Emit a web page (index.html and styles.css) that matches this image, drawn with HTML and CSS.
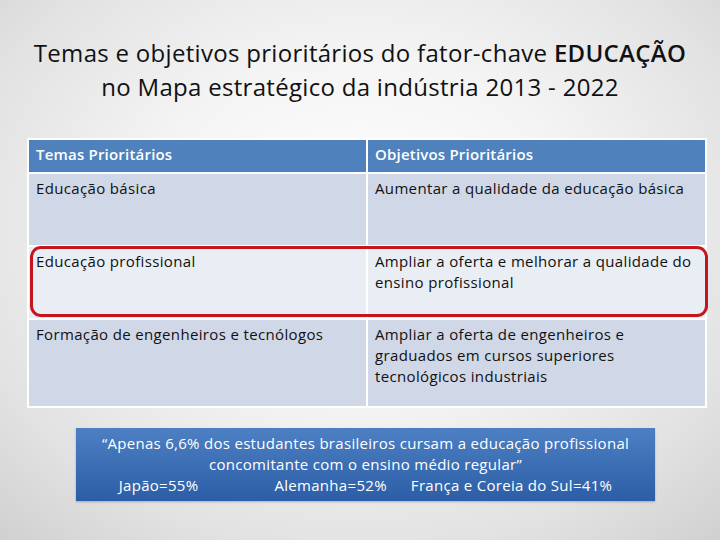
FILE: index.html
```html
<!DOCTYPE html>
<html lang="pt">
<head>
<meta charset="utf-8">
<link rel="stylesheet" href="styles.css">
</head>
<body>
<div class="slide">
  <h1 class="title">Temas e objetivos prioritários do fator-chave <b>EDUCAÇÃO</b><br>no Mapa estratégico da indústria 2013 - 2022</h1>
  <div class="table-wrap">
    <div class="grid">
      <div class="cell head">Temas Prioritários</div>
      <div class="cell head">Objetivos Prioritários</div>
      <div class="cell odd">Educação básica</div>
      <div class="cell odd">Aumentar a qualidade da educação básica</div>
      <div class="cell even">Educação profissional</div>
      <div class="cell even">Ampliar a oferta e melhorar a qualidade do ensino profissional</div>
      <div class="cell odd">Formação de engenheiros e tecnólogos</div>
      <div class="cell odd">Ampliar a oferta de engenheiros e graduados em cursos superiores tecnológicos industriais</div>
    </div>
    <div class="highlight"></div>
  </div>
  <div class="note">
    <div>“Apenas 6,6% dos estudantes brasileiros cursam a educação profissional</div>
    <div>concomitante com o ensino médio regular”</div>
    <div class="stats"><span class="s1">Japão=55%</span><span class="s2">Alemanha=52%</span><span>França e Coreia do Sul=41%</span></div>
  </div>
</div>
</body>
</html>
```
FILE: styles.css
```css
html, body {
  margin: 0;
  padding: 0;
}
body {
  width: 720px;
  height: 540px;
  overflow: hidden;
  font-family: "Open Sans", Lato, sans-serif;
  font-variant-ligatures: none;
}
.slide {
  width: 720px;
  height: 540px;
  box-sizing: border-box;
  padding-top: 36px;
  background: radial-gradient(ellipse 75% 80% at 50% 42%, #ffffff 0%, #f4f4f4 40%, #e2e2e2 75%, #cfcfcf 100%);
}
.title {
  margin: 0;
  font-weight: normal;
  font-size: 24px;
  letter-spacing: 0.3px;
  line-height: 34px;
  text-align: center;
  color: #111;
}
.title b {
  font-weight: 600;
}
.table-wrap {
  position: relative;
  margin: 34px 0 0 27px;
  width: 680px;
}
.grid {
  display: grid;
  grid-template-columns: 337px 337px;
  grid-template-rows: 32px 71px 71px 86px;
  gap: 2px;
  padding: 2px;
  background: #fff;
}
.cell {
  padding: 4px 10px 4px 7px;
  font-size: 15px;
  letter-spacing: 0.35px;
  line-height: 21px;
  color: #111;
}
.head {
  background: #4f81bd;
  color: #fff;
  font-weight: 600;
  letter-spacing: 0.2px;
}
.odd {
  background: #d0d8e8;
}
.even {
  background: #e9edf4;
}
.highlight {
  position: absolute;
  left: 3px;
  top: 108px;
  right: -1px;
  height: 71px;
  box-sizing: border-box;
  border: 3px solid #c4161c;
  border-radius: 11px;
}
.note {
  margin: 20px 0 0 76px;
  width: 579px;
  height: 73px;
  box-sizing: border-box;
  padding-top: 5px;
  background: linear-gradient(#4d7fc3, #2c5ea7);
  box-shadow: 0 1px 2px rgba(0,0,0,0.25);
  color: #fff;
  text-align: center;
  font-size: 15px;
  letter-spacing: 0.3px;
  line-height: 21px;
}
.s1 {
  margin-right: 76px;
}
.s2 {
  margin-right: 24px;
}
```
